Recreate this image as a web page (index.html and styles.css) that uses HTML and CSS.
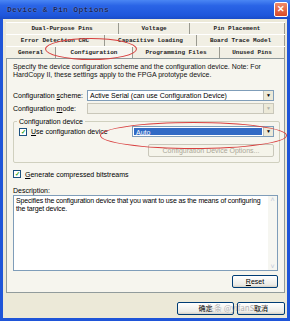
FILE: index.html
```html
<!DOCTYPE html>
<html lang="en">

<head>
  <meta charset="UTF-8" />
  <title>Device &amp; Pin Options</title>
  <link rel="stylesheet" href="styles.css">
</head>

<body>
  <div class="window">
    <div class="titlebar">
      <span class="title">Device &amp; Pin Options</span>
      <span class="close">&#x2715;</span>
    </div>

    <div class="client">
      <div class="tabs">
        <div class="tab-row">
          <div class="tab w113">Dual-Purpose Pins</div>
          <div class="tab w71">Voltage</div>
          <div class="tab w95">Pin Placement</div>
        </div>
        <div class="tab-row">
          <div class="tab w99">Error Detection CRC</div>
          <div class="tab w92">Capacitive Loading</div>
          <div class="tab w88">Board Trace Model</div>
        </div>
        <div class="tab-row">
          <div class="tab w50">General</div>
          <div class="tab w77 active">Configuration</div>
          <div class="tab w87">Programming Files</div>
          <div class="tab w65">Unused Pins</div>
        </div>
      </div>

      <div class="panel">
        <p class="intro">Specify the device configuration scheme and the configuration device. Note: For HardCopy II, these settings apply to the FPGA prototype device.</p>

        <div class="field">
          <label>Configuration <u>s</u>cheme:</label>
          <div class="combo">
            <span class="combo-text">Active Serial (can use Configuration Device)</span>
            <span class="arrow">&#9660;</span>
          </div>
        </div>
        <div class="field">
          <label>Configuration <u>m</u>ode:</label>
          <div class="combo disabled">
            <span class="combo-text"></span>
            <span class="arrow">&#9660;</span>
          </div>
        </div>

        <fieldset class="group">
          <legend>Configuration device</legend>
          <div class="group-row">
            <span class="check">&#10003;</span>
            <span class="use-label"><u>U</u>se configuration device</span>
            <div class="combo selected">
              <span class="combo-text">Auto</span>
              <span class="arrow">&#9660;</span>
            </div>
          </div>
          <div class="group-btn">
            <span class="btn disabled-btn">Configuration Device Options...</span>
          </div>
        </fieldset>

        <div class="check-row">
          <span class="check">&#10003;</span>
          <span><u>G</u>enerate compressed bitstreams</span>
        </div>

        <div class="desc-label">Description:</div>
        <div class="desc">
          <p>Specifies the configuration device that you want to use as the means of configuring the target device.</p>
          <div class="scrollbar">
            <span>&#708;</span>
            <span>&#709;</span>
          </div>
        </div>

        <div class="reset-row">
          <span class="btn reset"><u>R</u>eset</span>
        </div>
      </div>

      <div class="buttons">
        <span class="btn ok">确定</span>
        <span class="btn cancel">取消</span>
      </div>
    </div>

    <!-- annotations drawn over the shot -->
    <div class="mark mark-tab"></div>
    <div class="mark mark-auto"></div>
    <div class="watermark">头条 @yifanSD</div>
  </div>
</body>

</html>
```

FILE: styles.css
```css
body {
  margin: 0;
  width: 290px;
  height: 321px;
  overflow: hidden;
  font-family: "Liberation Sans", Arial, sans-serif;
  font-size: 7px;
  color: #000;
}

.window {
  position: relative;
  width: 290px;
  height: 321px;
  box-sizing: border-box;
  background-color: #1f55d8;
  padding: 0 3px 3px 3px;
  display: flex;
  flex-direction: column;
}

.titlebar {
  height: 19px;
  margin: 0 -3px;
  padding: 0 2px 0 7px;
  display: flex;
  align-items: center;
  justify-content: space-between;
  background: linear-gradient(#4a86f4, #2a64e6 30%, #1f57dc 80%, #1a4cc8);
}

.title {
  font-family: "Liberation Mono", monospace;
  font-weight: bold;
  font-size: 8px;
  color: #12245e;
  text-shadow: 0 0 1px #8fb0f0;
  letter-spacing: 0.3px;
}

.close {
  width: 12px;
  height: 13px;
  border: 1px solid #fff;
  border-radius: 2px;
  background: linear-gradient(#f08a6a, #d84a28);
  color: #fff;
  font-size: 9px;
  font-weight: bold;
  line-height: 13px;
  text-align: center;
}

.client {
  flex: 1;
  background-color: #ece9d8;
  padding: 3px 2px 0 3px;
  display: flex;
  flex-direction: column;
}

.tab-row {
  display: flex;
  height: 11px;
  background-color: #f1efe4;
  border-top: 1px solid #fff;
}

.tab {
  box-sizing: border-box;
  border-right: 1px solid #9a9a90;
  font-family: "Liberation Mono", monospace;
  font-weight: bold;
  font-size: 6px;
  line-height: 11px;
  text-align: center;
  white-space: nowrap;
  color: #222;
}

.tab.active {
  background-color: #f7f6f0;
}

.w50 { width: 50px; }
.w65 { width: 65px; }
.w71 { width: 71px; }
.w77 { width: 77px; }
.w87 { width: 87px; }
.w88 { width: 88px; }
.w92 { width: 92px; }
.w95 { width: 95px; }
.w99 { width: 99px; }
.w113 { width: 113px; }

.panel {
  height: 235px;
  box-sizing: border-box;
  border: 1px solid #919b9c;
  background-color: #f6f5ee;
  padding: 4px 6px 0 6px;
  display: flex;
  flex-direction: column;
}

.intro {
  margin: 0;
  line-height: 8px;
  color: #111;
}

.field {
  display: flex;
  align-items: center;
  margin-top: 2px;
}

.field:first-of-type {
  margin-top: 11px;
}

.field label {
  width: 74px;
}

.combo {
  box-sizing: border-box;
  width: 187px;
  height: 11px;
  border: 1px solid #7f9db9;
  background-color: #fff;
  display: flex;
  align-items: stretch;
}

.combo-text {
  flex: 1;
  padding-left: 2px;
  line-height: 9px;
}

.arrow {
  width: 9px;
  background-color: #ece9d8;
  border-left: 1px solid #c0c0b8;
  font-size: 5px;
  line-height: 9px;
  text-align: center;
}

.combo.disabled {
  background-color: #f0efe6;
  border-color: #c9c7ba;
}

.combo.disabled .arrow {
  color: #b0b0a8;
}

.group {
  margin: 4px 0 0 0;
  padding: 1px 5px 5px 5px;
  border: 1px solid #d0d0bf;
  border-radius: 2px;
}

.group legend {
  padding: 0 2px;
  margin-left: -2px;
}

.group-row {
  display: flex;
  align-items: center;
}

.check {
  box-sizing: border-box;
  width: 8px;
  height: 8px;
  border: 1px solid #1c5180;
  background-color: #fff;
  color: #21a121;
  font-size: 6px;
  font-weight: bold;
  line-height: 6px;
  text-align: center;
  margin-right: 4px;
}

.use-label {
  width: 101px;
}

.combo.selected {
  width: 142px;
}

.combo.selected .combo-text {
  background-color: #316ac5;
  color: #fff;
  margin: 1px;
}

.group-btn {
  display: flex;
  justify-content: flex-end;
  margin-top: 7px;
}

.btn {
  box-sizing: border-box;
  display: inline-block;
  height: 13px;
  border: 1px solid #003c74;
  border-radius: 2px;
  background: linear-gradient(#fff, #ecebe6 80%, #d6d0c5);
  line-height: 11px;
  text-align: center;
}

.disabled-btn {
  width: 126px;
  border-color: #c9c7ba;
  color: #aca899;
  background: #f5f4ea;
}

.check-row {
  display: flex;
  align-items: center;
  margin-top: 7px;
}

.desc-label {
  margin-top: 9px;
}

.desc {
  height: 74px;
  margin-top: 1px;
  border: 1px solid #7f9db9;
  background-color: #fff;
  display: flex;
}

.desc p {
  flex: 1;
  margin: 0;
  padding: 1px 2px;
  line-height: 8px;
  letter-spacing: -0.15px;
}

.scrollbar {
  width: 9px;
  background-color: #f6f6f1;
  display: flex;
  flex-direction: column;
  justify-content: space-between;
  color: #c0c8d8;
  font-size: 7px;
  text-align: center;
}

.reset-row {
  display: flex;
  justify-content: flex-end;
  margin-top: 4px;
}

.reset {
  width: 46px;
}

.buttons {
  display: flex;
  justify-content: flex-end;
  gap: 3px;
  margin-top: 9px;
}

.buttons .btn {
  font-family: "Noto Sans CJK SC", sans-serif;
  font-size: 7px;
}

.ok {
  width: 57px;
}

.cancel {
  width: 48px;
}

.mark {
  position: absolute;
  border: 1px solid #d84040;
  border-radius: 50%;
}

.mark-tab {
  left: 45px;
  top: 38px;
  width: 90px;
  height: 20px;
}

.mark-auto {
  left: 100px;
  top: 122px;
  width: 185px;
  height: 25px;
}

.watermark {
  position: absolute;
  left: 206px;
  top: 302px;
  font-family: "Noto Sans CJK SC", sans-serif;
  font-size: 8px;
  color: rgba(120, 120, 130, 0.55);
}
```
